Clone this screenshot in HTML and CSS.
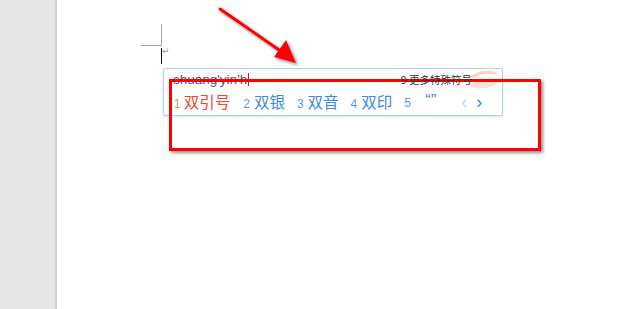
FILE: index.html
```html
<!DOCTYPE html>
<html lang="zh">
<head>
<meta charset="utf-8">
<link rel="stylesheet" href="styles.css">
</head>
<body>
<div class="app">
  <div class="sidebar"></div>
  <div class="doc">
    <div class="corner-v"></div>
    <div class="corner-h"></div>
    <div class="caret"></div>
    <div class="para">↵</div>
    <div class="ime">
      <div class="ime-top">
        <span class="pinyin">shuang'yin'h<span class="ime-caret"></span></span>
        <span class="more">9 更多特殊符号</span>
        <svg class="logo" width="34" height="22" viewBox="0 0 34 22"><path d="M4 8 C12 0 30 0 32 6 C26 4 14 4 8 9 Z" fill="#f7c9b8" opacity="0.8"/><path d="M2 16 C12 10 26 10 32 14 C24 20 10 22 2 16 Z" fill="#f9d6c8" opacity="0.7"/></svg>
      </div>
      <div class="cands">
        <span class="cand first"><span class="num">1</span>双引号</span>
        <span class="cand"><span class="num">2</span>双银</span>
        <span class="cand"><span class="num">3</span>双音</span>
        <span class="cand"><span class="num">4</span>双印</span>
        <span class="cand"><span class="num">5</span><span class="quote">“”</span></span>
        <span class="pager"><span class="prev">‹</span><span class="next">›</span></span>
      </div>
    </div>
    <div class="highlight"></div>
    <svg class="arrow" width="100" height="75" viewBox="0 0 100 75">
      <defs>
        <filter id="sh" x="-20%" y="-20%" width="150%" height="150%">
          <feGaussianBlur in="SourceAlpha" stdDeviation="1.5"/>
          <feOffset dx="2" dy="2" result="b"/>
          <feComponentTransfer><feFuncA type="linear" slope="0.45"/></feComponentTransfer>
          <feMerge><feMergeNode/><feMergeNode in="SourceGraphic"/></feMerge>
        </filter>
      </defs>
      <g filter="url(#sh)">
        <line x1="4" y1="9" x2="66" y2="52" stroke="#ff0000" stroke-width="3" stroke-linecap="round"/>
        <polygon points="80,63 58,57 70,40" fill="#ff0000"/>
      </g>
    </svg>
  </div>
</div>
</body>
</html>
```
FILE: styles.css
```css
html, body {
  margin: 0;
  padding: 0;
  width: 620px;
  height: 309px;
  overflow: hidden;
  background: #ffffff;
  font-family: "Noto Sans CJK SC", "Liberation Sans", sans-serif;
}
.app {
  display: flex;
  width: 620px;
  height: 309px;
}
.sidebar {
  width: 55px;
  flex: none;
  background: #e5e5e5;
  border-right: 2px solid #d2d2d2;
}
.doc {
  position: relative;
  flex: 1;
  background: #ffffff;
}
.corner-v {
  position: absolute;
  left: 104px;
  top: 24px;
  width: 1px;
  height: 22px;
  background: #a8a8a8;
}
.corner-h {
  position: absolute;
  left: 84px;
  top: 45px;
  width: 21px;
  height: 1px;
  background: #a8a8a8;
}
.caret {
  position: absolute;
  left: 104px;
  top: 48px;
  width: 1px;
  height: 16px;
  background: #111;
}
.para {
  position: absolute;
  left: 105px;
  top: 45px;
  font-size: 9px;
  line-height: 12px;
  color: #9a9a9a;
  font-family: "DejaVu Sans", sans-serif;
}
.ime {
  position: absolute;
  left: 106px;
  top: 68px;
  width: 338px;
  height: 46px;
  border: 1px solid #b4cfe9;
  border-radius: 2px;
  background: #ffffff;
  box-shadow: 0 1px 2px rgba(120, 150, 190, 0.25);
  display: flex;
  flex-direction: column;
}
.ime-top {
  position: relative;
  height: 20px;
  display: flex;
  align-items: center;
  padding-left: 9px;
  padding-right: 30px;
}
.pinyin {
  font-family: "Liberation Sans", sans-serif;
  font-size: 13.5px;
  color: #2f5d9e;
  display: flex;
  align-items: center;
  flex: 1;
}
.ime-caret {
  display: inline-block;
  width: 1px;
  height: 13px;
  background: #c02020;
  margin-left: 1px;
}
.more {
  font-size: 10.5px;
  color: #333;
  position: relative;
  z-index: 1;
}
.logo {
  position: absolute;
  right: 2px;
  top: 0;
}
.cands {
  display: flex;
  align-items: center;
  height: 26px;
  padding-left: 10px;
  color: #3d88e0;
}
.cand {
  font-size: 15.5px;
  margin-right: 12px;
  display: flex;
  align-items: baseline;
  line-height: 20px;
}
.num {
  font-family: "Liberation Sans", sans-serif;
  font-size: 12px;
  color: #5a9ce4;
  margin-right: 4px;
}
.first {
  color: #f4472b;
  margin-right: 13px;
}
.first .num {
  color: #f2876c;
  margin-right: 3px;
}
.quote {
  margin-left: 10px;
  font-family: "Liberation Sans", sans-serif;
  font-size: 17px;
  position: relative;
  top: -1px;
}
.pager {
  display: flex;
  gap: 9px;
  margin-left: 13px;
  font-family: "Liberation Sans", sans-serif;
  font-size: 18px;
  line-height: 20px;
}
.prev {
  color: #c6daf2;
}
.next {
  color: #3d88e0;
}
.highlight {
  position: absolute;
  left: 112px;
  top: 79px;
  width: 366px;
  height: 66px;
  border: 3px solid #ff0000;
  box-shadow: 2px 2px 3px rgba(0, 0, 0, 0.45);
}
.arrow {
  position: absolute;
  left: 159px;
  top: 0;
}
```
